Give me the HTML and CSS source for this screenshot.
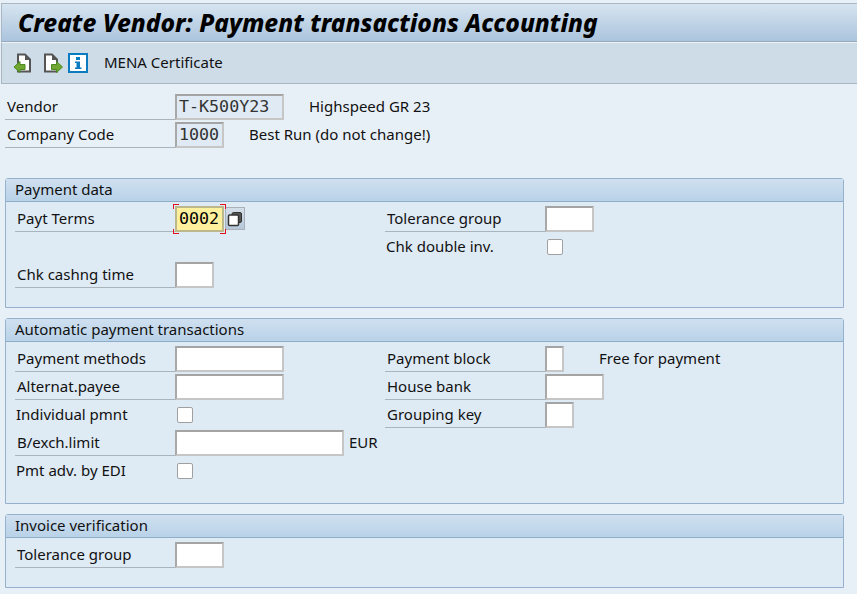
FILE: index.html
```html
<!DOCTYPE html>
<html lang="en">
<head>
<meta charset="utf-8">
<title>Create Vendor: Payment transactions Accounting</title>
<link rel="stylesheet" href="styles.css">
</head>
<body>
<header class="titlebar"><h1>Create Vendor: Payment transactions Accounting</h1></header>
<nav class="toolbar">
  <svg class="icon icon-prev" width="20" height="20" viewBox="0 0 20 20"><path d="M5 1.500H12L17 6.500V18.500H5Z" fill="#fff" stroke="#555" stroke-width="2"/><path d="M12 1V7H17Z" fill="#555"/><path d="M1 14L7 8.500V11.500H12V16.500H7V19.500Z" fill="#6fa732" stroke="#4b8a1e"/></svg>
  <svg class="icon icon-next" width="20" height="20" viewBox="0 0 20 20"><path d="M2 1.500H9L14 6.500V18.500H2Z" fill="#fff" stroke="#555" stroke-width="2"/><path d="M9 1V7H14Z" fill="#555"/><path d="M19.500 14L13.500 8.500V11.500H8.500V16.500H13.500V19.500Z" fill="#6fa732" stroke="#4b8a1e"/></svg>
  <svg class="icon icon-info" width="20" height="20" viewBox="0 0 20 20"><rect x="1" y="1" width="18" height="18" fill="#fff" stroke="#0b7cc0" stroke-width="2"/><rect x="8" y="4" width="4" height="3" fill="#0b7cc0"/><path d="M7 8.500H12V14.500H13.500V16H7V14.500H8.500V10H7Z" fill="#0b7cc0"/></svg>
  <span class="tool-text">MENA Certificate</span>
</nav>
<main class="screen">
  <section class="head-fields">
    <div class="head-row">
      <label class="lbl lbl-head">Vendor</label><span class="inp ro w-108">T-K500Y23</span><span class="desc d-vendor">Highspeed GR 23</span>
    </div>
    <div class="head-row">
      <label class="lbl lbl-head">Company Code</label><span class="inp ro w-48">1000</span><span class="desc d-company">Best Run (do not change!)</span>
    </div>
  </section>

  <section class="group">
    <h2 class="group-title">Payment data</h2>
    <div class="grid">
      <label class="lbl">Payt Terms</label>
      <div class="cell"><span class="required"><span class="inp focus w-48">0002</span></span><span class="f4"><svg width="16" height="16" viewBox="0 0 16 16"><rect x="5" y="1.500" width="9.500" height="10" rx="1.500" fill="#555" stroke="#333"/><rect x="1.500" y="4" width="10" height="10.500" rx="1" fill="#fff" stroke="#333" stroke-width="1.500"/></svg></span></div>
      <label class="lbl">Tolerance group</label>
      <div class="cell"><span class="inp w-48"></span></div>

      <span></span><span></span>
      <span class="plain">Chk double inv.</span>
      <div class="cell"><span class="chk"></span></div>

      <label class="lbl">Chk cashng time</label>
      <div class="cell"><span class="inp w-38"></span></div>
      <span></span><span></span>
    </div>
  </section>

  <section class="group">
    <h2 class="group-title">Automatic payment transactions</h2>
    <div class="grid">
      <label class="lbl">Payment methods</label>
      <div class="cell"><span class="inp w-108"></span></div>
      <label class="lbl">Payment block</label>
      <div class="cell"><span class="inp w-18"></span><span class="desc d-block">Free for payment</span></div>

      <label class="lbl">Alternat.payee</label>
      <div class="cell"><span class="inp w-108"></span></div>
      <label class="lbl">House bank</label>
      <div class="cell"><span class="inp w-58"></span></div>

      <span class="plain">Individual pmnt</span>
      <div class="cell"><span class="chk"></span></div>
      <label class="lbl">Grouping key</label>
      <div class="cell"><span class="inp w-28"></span></div>

      <label class="lbl">B/exch.limit</label>
      <div class="cell"><span class="inp w-168"></span><span class="desc d-eur">EUR</span></div>
      <span></span><span></span>

      <span class="plain">Pmt adv. by EDI</span>
      <div class="cell"><span class="chk"></span></div>
      <span></span><span></span>
    </div>
  </section>

  <section class="group">
    <h2 class="group-title">Invoice verification</h2>
    <div class="grid">
      <label class="lbl">Tolerance group</label>
      <div class="cell"><span class="inp w-48"></span></div>
      <span></span><span></span>
    </div>
  </section>
</main>
</body>
</html>
```
FILE: styles.css
```css
* { box-sizing: border-box; }
html, body { margin: 0; padding: 0; }
body {
  width: 857px;
  height: 594px;
  overflow: hidden;
  background: #e8f0f7;
  color: #111;
  font-family: "Noto Sans", sans-serif;
  font-size: 15px;
  padding-top: 3px;
}
.titlebar {
  height: 39px;
  margin-left: 1px;
  background: linear-gradient(#d6e4f0, #abc4dd);
  border-top: 1px solid #a9b6c4;
  border-left: 1px solid #a9b6c4;
  border-bottom: 1px solid #98a9bb;
  display: flex;
  align-items: center;
  padding-left: 16px;
}
.titlebar h1 {
  margin: 0;
  font-family: "Noto Sans", sans-serif;
  font-size: 24.5px;
  font-style: italic;
  font-weight: 800;
  color: #000;
  white-space: nowrap;
}
.toolbar {
  height: 42px;
  margin-left: 1px;
  background: #cedce8;
  border-top: 1px solid #eef3f8;
  border-left: 1px solid #a9b6c4;
  border-bottom: 1px solid #a9b6c4;
  display: flex;
  align-items: center;
}
.icon { display: block; flex: none; }
.icon-prev { margin-left: 11px; }
.icon-next { margin-left: 10px; }
.icon-info { margin-left: 5px; }
.tool-text { margin-left: 16px; padding-bottom: 2px; }
.screen { padding-top: 10px; }
.head-fields { display: flex; flex-direction: column; gap: 2px; margin-left: 5px; margin-bottom: 30px; }
.head-row { display: flex; height: 26px; }
.lbl, .plain {
  display: flex;
  align-items: center;
  height: 26px;
  padding-bottom: 2px;
  white-space: nowrap;
}
.lbl { border-bottom: 1px solid #aab4bd; padding-left: 2px; }
.lbl-head { width: 170px; }
.plain { padding-left: 1px; }
.inp {
  display: block;
  flex: none;
  height: 26px;
  background: #fff;
  border: 2px solid #b6b6b6;
  border-top-color: #a4a4a4;
  border-left-color: #a8a8a8;
  border-right-color: #c6c6c6;
  border-bottom-color: #c6c6c6;
  font-family: "DejaVu Sans Mono", monospace;
  font-size: 16.67px;
  line-height: 22px;
  padding-left: 2px;
}
.ro { background: #dfeaf4; color: #333; }
.focus { background: #fff09e; border-color: #bdb88c; color: #000; }
.w-18 { width: 19px; }
.w-28 { width: 29px; }
.w-38 { width: 39px; }
.w-48 { width: 49px; }
.w-58 { width: 59px; }
.w-108 { width: 109px; }
.w-168 { width: 169px; }
.desc { align-self: center; padding-bottom: 2px; white-space: nowrap; }
.d-vendor { margin-left: 25px; }
.d-company { margin-left: 25px; }
.d-block { margin-left: 35px; }
.d-eur { margin-left: 5px; }

.group {
  margin: 0 13px 10px 5px;
  background: #deeaf4;
  border: 1px solid #95b1cc;
  border-radius: 3px 3px 0 0;
}
.group-title {
  margin: 0;
  height: 23px;
  background: linear-gradient(#cfe0f0, #b9d2e8);
  border-bottom: 1px solid #8fadc9;
  font-size: 15px;
  font-weight: 400;
  line-height: 20px;
  padding-left: 9px;
}
.grid {
  display: grid;
  grid-template-columns: 160px 210px 160px 1fr;
  grid-auto-rows: 26px;
  row-gap: 2px;
  padding: 4px 0 19px 9px;
}
.cell { display: flex; align-items: flex-start; }
.cell .chk { margin: 5px 0 0 2px; }
.chk {
  display: block;
  width: 16px;
  height: 16px;
  background: #fff;
  border: 1px solid #a0a0a0;
  border-radius: 2px;
}
.required { position: relative; display: block; }
.required::after {
  content: "";
  position: absolute;
  left: -2px;
  top: -2px;
  width: 53px;
  height: 30px;
  pointer-events: none;
  background:
    linear-gradient(#e0141e, #e0141e) 0 0 / 6px 1px,
    linear-gradient(#e0141e, #e0141e) 0 0 / 1px 5px,
    linear-gradient(#e0141e, #e0141e) 100% 0 / 6px 1px,
    linear-gradient(#e0141e, #e0141e) 100% 0 / 1px 5px,
    linear-gradient(#e0141e, #e0141e) 0 100% / 6px 1px,
    linear-gradient(#e0141e, #e0141e) 0 100% / 1px 5px,
    linear-gradient(#e0141e, #e0141e) 100% 100% / 6px 1px,
    linear-gradient(#e0141e, #e0141e) 100% 100% / 1px 5px;
  background-repeat: no-repeat;
}
.f4 {
  display: flex;
  align-items: center;
  justify-content: center;
  width: 20px;
  height: 23px;
  margin-left: 1px;
  margin-top: 1px;
  background: linear-gradient(#d5dfe9, #b6c7da);
  border: 1px solid #a9b0b8;
}
```
